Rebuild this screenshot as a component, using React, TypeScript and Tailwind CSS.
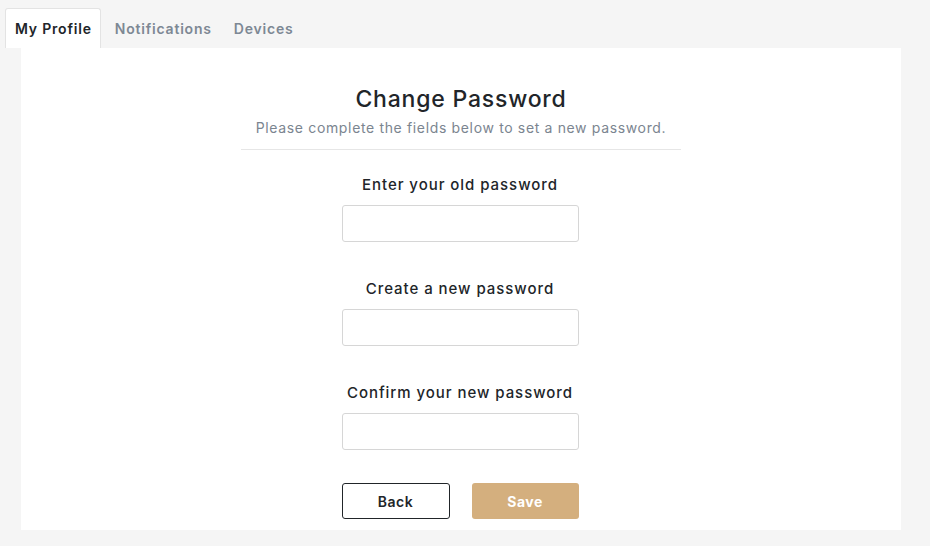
import React from "react";

export default function App() {
  const font = { fontFamily: 'Inter, "Noto Sans", sans-serif' };
  const fields = ["Enter your old password", "Create a new password", "Confirm your new password"];
  return (
    <div className="w-[930px] h-[546px] bg-[#f5f5f5] pt-[8px] pl-[5px]" style={font}>
      <div className="flex items-end h-[40px]">
        <div className="h-[40px] pl-[9px] pr-[8px] flex items-center bg-white border border-b-0 border-[#e3e3e3] rounded-t-[3px] text-[14px] font-semibold text-[#212529] tracking-[0.8px]">
          My Profile
        </div>
        <div className="h-[40px] pl-[14px] pr-[11px] flex items-center text-[14px] font-semibold text-[#7d8894] tracking-[0.8px]">
          Notifications
        </div>
        <div className="h-[40px] pl-[11px] pr-[10px] flex items-center text-[14px] font-semibold text-[#7d8894] tracking-[0.8px]">
          Devices
        </div>
      </div>
      <div className="ml-[16px] w-[880px] h-[482px] bg-white flex flex-col items-center">
        <h1 className="mt-[37px] text-[23px] leading-[28px] font-medium text-[#212529] tracking-[0.8px]">
          Change Password
        </h1>
        <p className="mt-[5px] text-[14px] leading-[20px] text-[#7b8590] tracking-[0.65px]">
          Please complete the fields below to set a new password.
        </p>
        <div className="mt-[11px] w-[440px] h-px bg-[#e6e6e6]" />
        <div className="mt-[25px] mr-[2px] flex flex-col items-center gap-[37px]">
          {fields.map((f) => (
            <div key={f} className="flex flex-col items-center">
              <label className="text-[15px] leading-[20px] font-medium text-[#212529] tracking-[0.95px]">{f}</label>
              <input
                type="password"
                className="mt-[10px] w-[237px] h-[37px] border border-[#d6d6d6] rounded-[3px] bg-white outline-none"
              />
            </div>
          ))}
        </div>
        <div className="mt-[33px] mr-[2px] flex gap-[22px]">
          <button className="w-[108px] h-[36px] border border-[#212529] rounded-[3px] bg-white text-[14px] font-semibold text-[#212529] tracking-[0.5px]">
            Back
          </button>
          <button className="w-[107px] h-[36px] rounded-[3px] bg-[#d4af7e] text-[14px] font-bold text-white tracking-[0.5px]">
            Save
          </button>
        </div>
      </div>
    </div>
  );
}
